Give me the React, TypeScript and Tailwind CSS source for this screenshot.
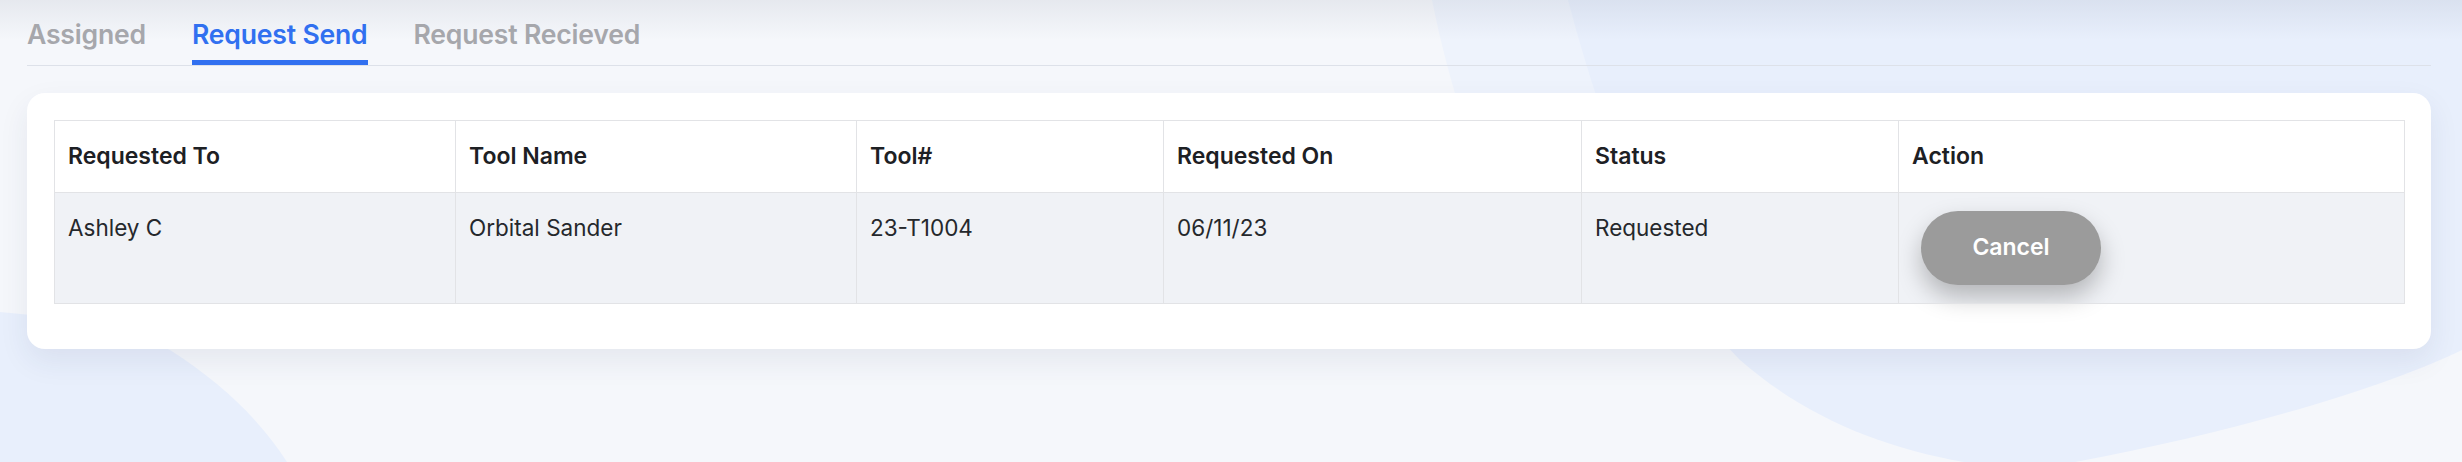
import React from 'react';

const tabs = ['Assigned', 'Request Send', 'Request Recieved'];

const rows = [
  {
    requestedTo: 'Ashley C',
    toolName: 'Orbital Sander',
    toolNo: '23-T1004',
    requestedOn: '06/11/23',
    status: 'Requested',
  },
];

function Backdrop() {
  // soft blue blobs behind the page
  return (
    <svg
      className="absolute inset-0 h-full w-full"
      viewBox="0 0 2462 462"
      preserveAspectRatio="none"
    >
      <defs>
        <linearGradient id="topShade" x1="0" y1="0" x2="0" y2="1">
          <stop offset="0" stopColor="#1e2a4a" stopOpacity="0.07" />
          <stop offset="1" stopColor="#1e2a4a" stopOpacity="0" />
        </linearGradient>
      </defs>
      <rect width="2462" height="462" fill="#f5f7fb" />
      <path
        d="M1432,0 C1450,90 1480,180 1520,260 L1700,260 L1700,0 Z"
        fill="#eef3fc"
      />
      <path
        d="M1568,0 C1600,120 1650,270 1740,360 C1820,430 1920,462 2030,470 C2210,440 2380,390 2462,350 L2462,0 Z"
        fill="#e8effc"
      />
      <path
        d="M0,312 C70,318 130,332 170,350 C225,385 265,425 292,470 L0,470 Z"
        fill="#e8effc"
      />
      <rect width="2462" height="40" fill="url(#topShade)" />
    </svg>
  );
}

export default function App() {
  const active = 1;

  return (
    <div className="relative h-[462px] w-[2462px] overflow-hidden font-['Inter',sans-serif]">
      <Backdrop />
      <div className="relative pl-[27px] pr-[31px]">
        {/* Tabs */}
        <div className="flex gap-[46px] border-b border-[#dde1e9] pt-[14px]">
          {tabs.map((tab, i) => (
            <div key={tab} className="flex flex-col">
              <span
                className={`text-[26.6px] font-semibold leading-[40px] tracking-[-0.2px] ${
                  i === active ? 'text-[#3170f0]' : 'text-[#a6a7ac]'
                }`}
              >
                {tab}
              </span>
              <div
                className={`mt-[6px] h-[5px] ${i === active ? 'bg-[#3170f0]' : 'bg-transparent'}`}
              />
            </div>
          ))}
        </div>

        {/* Card */}
        <div className="mt-[27px] rounded-[18px] bg-white px-[27px] pt-[27px] pb-[45px] shadow-[0_12px_30px_rgba(40,50,90,0.08)]">
          <table className="w-full table-fixed border-collapse text-[23px] leading-[1.5]">
            <colgroup>
              <col className="w-[401px]" />
              <col className="w-[401px]" />
              <col className="w-[307px]" />
              <col className="w-[418px]" />
              <col className="w-[317px]" />
              <col className="w-[506px]" />
            </colgroup>
            <thead>
              <tr className="bg-white">
                {['Requested To', 'Tool Name', 'Tool#', 'Requested On', 'Status', 'Action'].map((h) => (
                  <th
                    key={h}
                    className="border border-[#e2e3e6] px-[13px] py-[18px] text-left font-semibold text-[#1d2024]"
                  >
                    {h}
                  </th>
                ))}
              </tr>
            </thead>
            <tbody>
              {rows.map((row) => (
                <tr key={row.toolNo} className="bg-[#f0f2f6] text-[22.5px] text-[#25282c]">
                  <td className="border border-[#e2e3e6] px-[13px] py-[18px] align-top">{row.requestedTo}</td>
                  <td className="border border-[#e2e3e6] px-[13px] py-[18px] align-top">{row.toolName}</td>
                  <td className="border border-[#e2e3e6] px-[13px] py-[18px] align-top">{row.toolNo}</td>
                  <td className="border border-[#e2e3e6] px-[13px] py-[18px] align-top">{row.requestedOn}</td>
                  <td className="border border-[#e2e3e6] px-[13px] py-[18px] align-top">{row.status}</td>
                  <td className="border border-[#e2e3e6] px-[13px] py-[18px] align-top">
                    <button className="ml-[9px] flex h-[74px] w-[180px] items-center justify-center rounded-full bg-[#9b9b9b] text-[23px] font-semibold text-white shadow-[0_12px_24px_rgba(0,0,0,0.25)]">
                      Cancel
                    </button>
                  </td>
                </tr>
              ))}
            </tbody>
          </table>
        </div>
      </div>
    </div>
  );
}
